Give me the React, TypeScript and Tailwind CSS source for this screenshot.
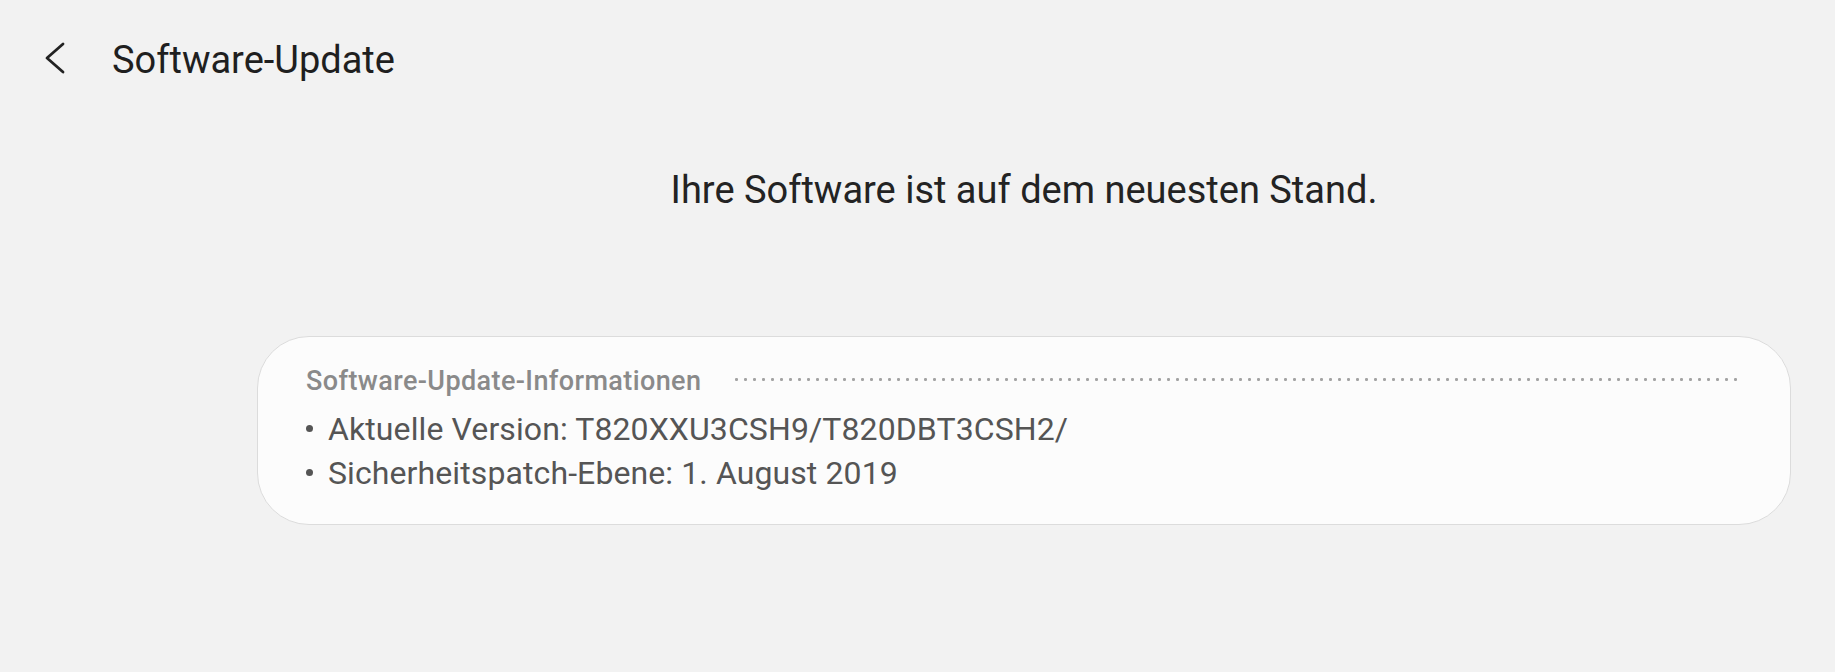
import React from 'react';

const infoLines = [
    'Aktuelle Version: T820XXU3CSH9/T820DBT3CSH2/',
    'Sicherheitspatch-Ebene: 1. August 2019',
];

function BackIcon() {
    return (
        <svg width="22" height="32" viewBox="0 0 22 32" fill="none" className="shrink-0">
            <polyline
                points="19,2 3,16 19,30"
                stroke="#222222"
                strokeWidth="2.8"
                strokeLinecap="round"
                strokeLinejoin="round"
            />
        </svg>
    );
}

export default function App() {
    return (
        <div
            className="min-h-screen w-full bg-[#f2f2f2] text-[#222222]"
            style={{ fontFamily: 'Roboto, "Noto Sans", sans-serif' }}
        >
            {/* Top bar */}
            <div className="flex items-center pl-[44px] pt-[34px] h-[82px]">
                <BackIcon />
                <div className="ml-[46px] pt-[3px] text-[38px] leading-[48px] text-[#1f1f1f]">
                    Software-Update
                </div>
            </div>

            <div className="ml-[257px] mr-[44px] flex flex-col">
                {/* Status message */}
                <div className="mt-[86px] text-center text-[38px] leading-[44px] text-[#232323]">
                    Ihre Software ist auf dem neuesten Stand.
                </div>

                {/* Info card */}
                <div className="mt-[124px] rounded-[52px] border border-[#dcdcdc] bg-[#fcfcfc] pl-[48px] pr-[52px] pt-[28px] pb-[29px]">
                    <div className="flex items-center">
                        <div className="text-[27px] leading-[32px] font-medium tracking-[0.4px] text-[#8a8a8a] whitespace-nowrap">
                            Software-Update-Informationen
                        </div>
                        <div className="ml-[31px] flex-1 h-[3px] -mt-[3px] bg-[radial-gradient(circle,#a3a3a3_1.3px,transparent_1.7px)] bg-[length:9px_3px] bg-repeat-x" />
                    </div>
                    <div className="mt-[10px]">
                        {infoLines.map((line) => (
                            <div key={line} className="flex items-center text-[32px] leading-[44px] text-[#555555]">
                                <span className="w-[7px] h-[7px] rounded-full bg-[#555555] shrink-0 -mt-[2px]" />
                                <span className="ml-[15px] tracking-[0.1px]">{line}</span>
                            </div>
                        ))}
                    </div>
                </div>
            </div>
        </div>
    );
}
